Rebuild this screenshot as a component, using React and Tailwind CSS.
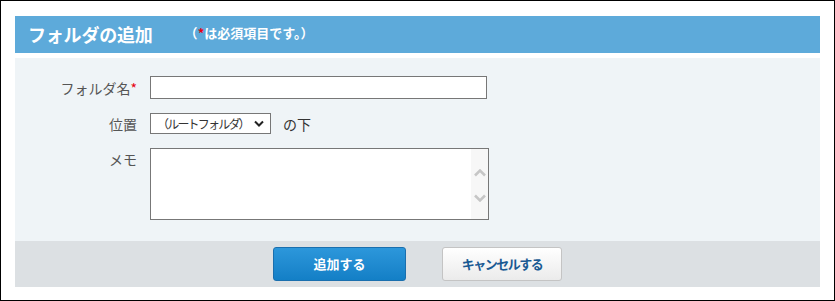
import React from 'react';

const jp = { fontFamily: '"Noto Sans CJK JP", "Noto Sans", sans-serif' };

function Chevron({ dir = 'down', w = 10, h = 7, sw = 2, className }) {
  const d = dir === 'down' ? `M1 1.5 L${w / 2} ${h - 1.5} L${w - 1} 1.5` : `M1 ${h - 1.5} L${w / 2} 1.5 L${w - 1} ${h - 1.5}`;
  return (
    <svg width={w} height={h} viewBox={`0 0 ${w} ${h}`} className={className}>
      <path d={d} fill="none" stroke="currentColor" strokeWidth={sw} />
    </svg>
  );
}

function Row({ label, required, top, children }) {
  return (
    <div className={`flex ${top ? 'items-start' : 'items-center'}`}>
      <div className={`w-[122px] text-right text-[14px] text-[#555] leading-none ${top ? 'pt-[4px]' : ''}`}>
        {label}
        {required && <span className="text-[#e60012]">*</span>}
      </div>
      <div className="ml-[13px] flex items-center">{children}</div>
    </div>
  );
}

export default function App() {
  return (
    <div className="w-[835px] h-[301px] border border-black bg-white px-[14px] pt-[15px]" style={jp}>
      {/* header */}
      <div className="h-[37px] bg-[#5daada] flex items-center pl-[13px]">
        <span className="text-white font-bold text-[18px] tracking-[-0.2px]">フォルダの追加</span>
        <span className="ml-[32px] text-white font-bold text-[13px] mb-[4px]">
          （<span className="text-[#e60012]">*</span>は必須項目です。）
        </span>
      </div>

      {/* form */}
      <div className="mt-[5px] bg-[#eff4f7] pt-[18px] pb-[21px] flex flex-col gap-[14px]">
        <Row label="フォルダ名" required>
          <input type="text" className="w-[337px] h-[23px] border border-[#777] bg-white outline-none" />
        </Row>
        <Row label="位置">
          <div className="w-[121px] h-[21px] border border-[#777] bg-white flex items-center pl-[6px] pr-[6px]">
            <span className="text-[12px] text-[#333] tracking-[-1.8px] leading-none">（ルートフォルダ）</span>
            <Chevron className="ml-auto text-[#222]" />
          </div>
          <span className="ml-[12px] text-[14px] text-[#333] leading-none">の下</span>
        </Row>
        <Row label="メモ" top>
          <div className="w-[339px] h-[72px] border border-[#777] bg-white flex">
            <textarea className="flex-1 resize-none outline-none bg-white" />
            <div className="w-[17px] bg-[#f7f7f7] flex flex-col items-center pt-[20px] gap-[17px] text-[#c6c6c6]">
              <Chevron dir="up" w={12} h={8} sw={2.5} />
              <Chevron dir="down" w={12} h={8} sw={2.5} />
            </div>
          </div>
        </Row>
      </div>

      {/* footer */}
      <div className="h-[46px] bg-[#dce0e3] flex justify-center items-start pt-[6px] gap-[36px]">
        <button className="w-[133px] h-[34px] rounded-[3px] border border-[#1a6fae] bg-gradient-to-b from-[#2c97db] to-[#137fc6] text-white font-bold text-[13px]">
          追加する
        </button>
        <button className="w-[120px] h-[34px] rounded-[3px] border border-[#c4c4c4] bg-gradient-to-b from-[#ffffff] to-[#ebebeb] text-[#1a5a93] font-bold text-[13px] tracking-[-1.5px]">
          キャンセルする
        </button>
      </div>
    </div>
  );
}
